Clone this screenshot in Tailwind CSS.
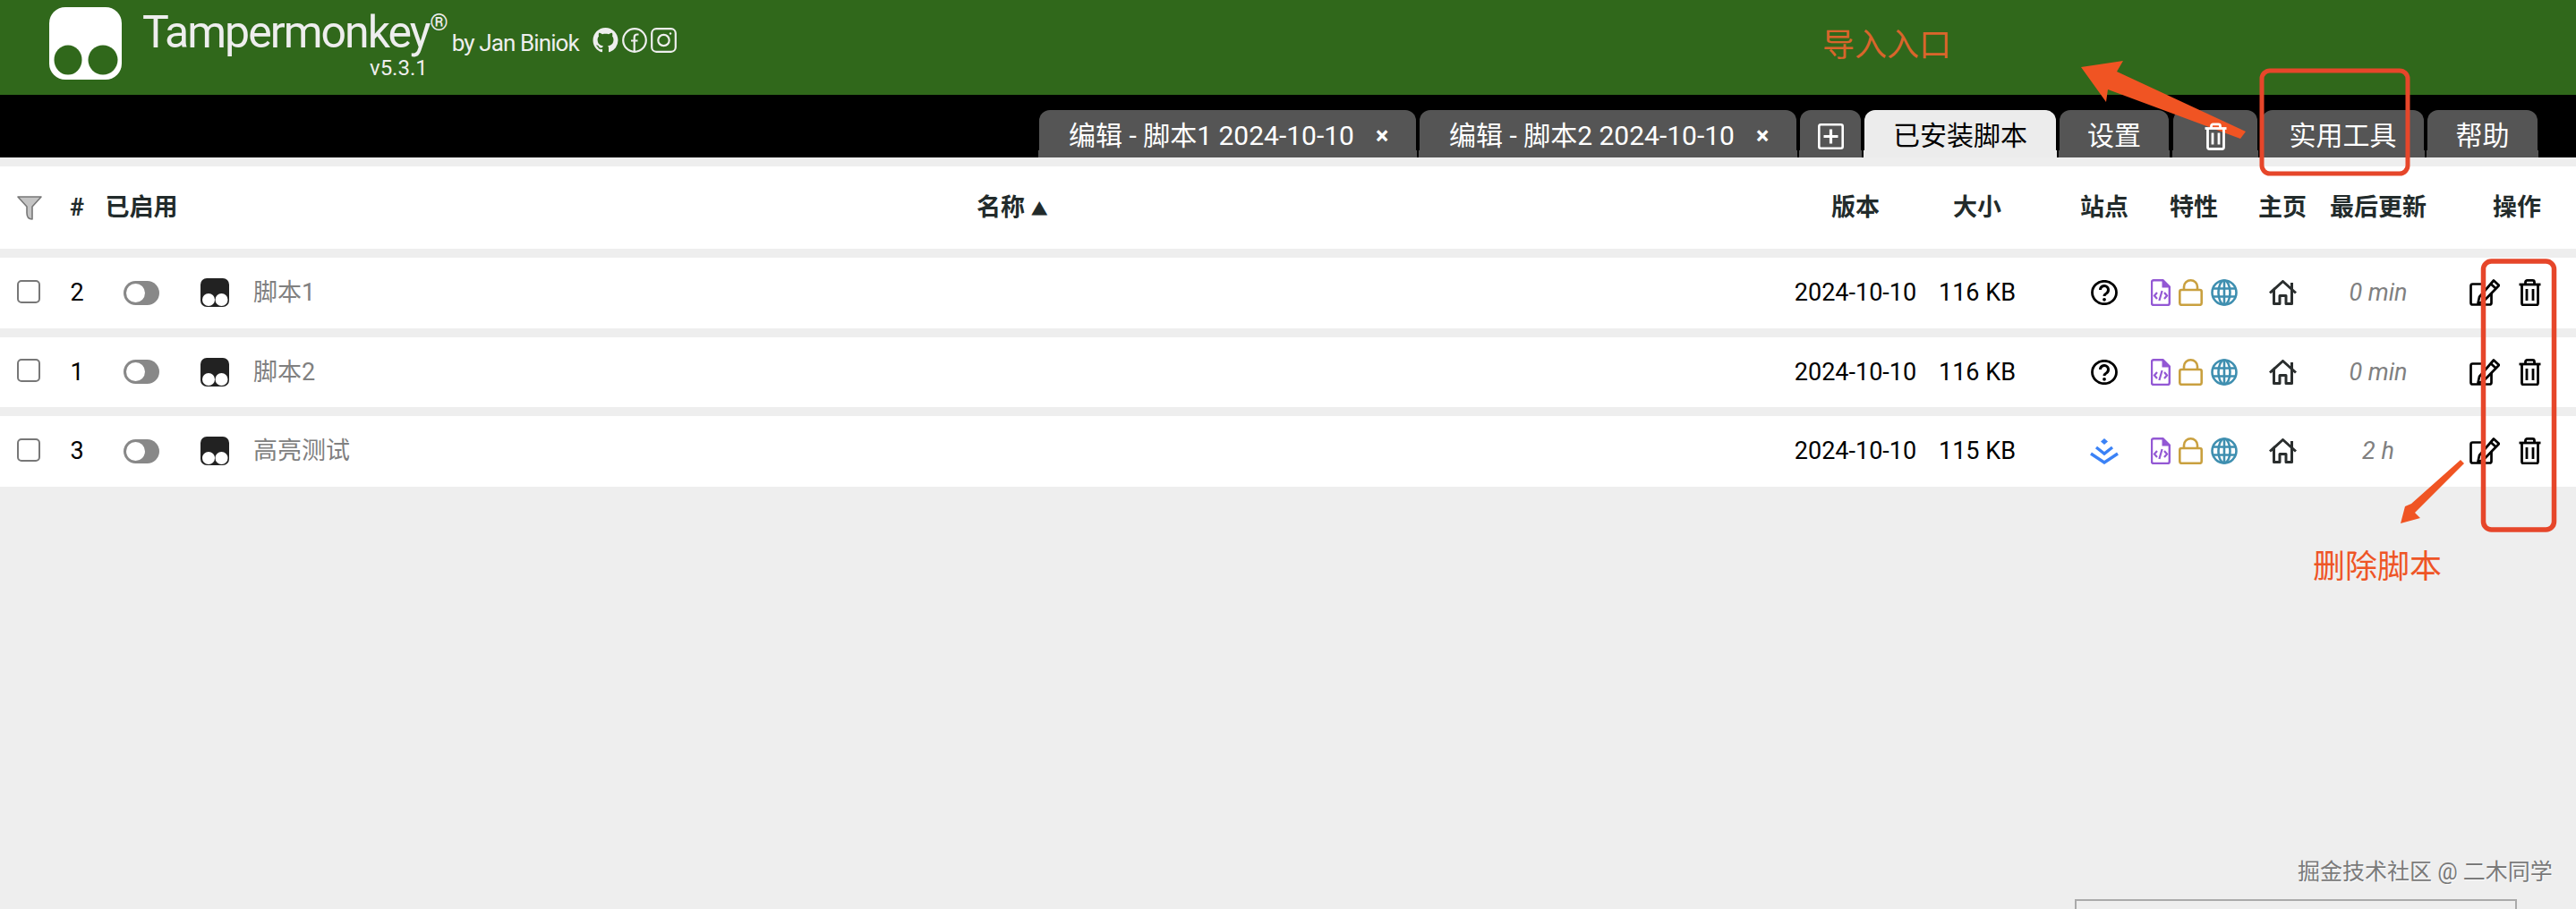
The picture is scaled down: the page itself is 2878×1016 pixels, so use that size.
<!doctype html>
<html>
<head>
  <meta charset="UTF-8" />
  <title>Tampermonkey</title>
  <script src="https://cdn.jsdelivr.net/npm/@tailwindcss/browser@4"></script>
</head>
<body class="relative h-[1016px] overflow-hidden bg-[#eeeeee] font-['Roboto','Noto_Sans_CJK_SC',sans-serif]">
<svg class="hidden">
  <symbol id="i-help" viewBox="0 0 30 28"><ellipse cx="15" cy="14" rx="13.5" ry="12.7" fill="none" stroke="#000" stroke-width="2.8"/><path d="M10.5 11a4.5 4.5 0 1 1 7 3.7c-1.6 1-2.5 1.7-2.5 3.3" fill="none" stroke="#000" stroke-width="3"/><circle cx="15" cy="21.8" r="1.9" fill="#000"/></symbol>
  <symbol id="i-file" viewBox="0 0 22 30"><path d="M3 1.2h10.5l7.3 7.3V27a2 2 0 0 1-2 2H3a2 2 0 0 1-2-2V3.2a2 2 0 0 1 2-2z" fill="none" stroke="#9358d4" stroke-width="2.4"/><path d="M13.5 1.2v7.3h7.3" fill="#9358d4" stroke="#9358d4" stroke-width="2"/><path d="M7 15l-3 3.5 3 3.5M15 15l3 3.5-3 3.5M12.6 13l-3.2 11" fill="none" stroke="#9358d4" stroke-width="2.2"/></symbol>
  <symbol id="i-lock" viewBox="0 0 27 30"><rect x="1.3" y="12" width="24.4" height="16.8" rx="2" fill="none" stroke="#c9a03f" stroke-width="2.6"/><path d="M6 12V8.5a7.5 7.2 0 0 1 15 0V12" fill="none" stroke="#c9a03f" stroke-width="2.6"/></symbol>
  <symbol id="i-globe" viewBox="0 0 30 30"><g fill="none" stroke="#3f8fb0" stroke-width="2.6"><circle cx="15" cy="15" r="13.5"/><ellipse cx="15" cy="15" rx="6.5" ry="13.5"/><path d="M15 1.5v27M2.5 10.5h25M2.5 19.5h25"/></g></symbol>
  <symbol id="i-home" viewBox="0 0 31 28"><g fill="none" stroke="#2a2e2e" stroke-width="3" stroke-linejoin="round"><path d="M1 14.5 15.5 1.5 30 14.5"/><path d="M5.5 11v15.5h6.5v-9h7v9h6.5V11"/><path d="M25.5 3v8"/></g></symbol>
  <symbol id="i-edit" viewBox="0 0 34 30"><g fill="none" stroke="#000" stroke-width="2.7" stroke-linejoin="round"><path d="M17 5.5H3.5a2 2 0 0 0-2 2v19a2 2 0 0 0 2 2h19a2 2 0 0 0 2-2V16"/><path d="M27 1.5 33 7 15 25.5 9.5 27 11 20z"/><path d="M23.5 5l6 5.5"/></g></symbol>
  <symbol id="i-trash" viewBox="0 0 25 30"><g fill="none" stroke="#000" stroke-width="2.8"><path d="M.5 6h24"/><path d="M7.5 6V3.4a2 2 0 0 1 2-2h6a2 2 0 0 1 2 2V6"/><path d="M3.5 6v21a2 2 0 0 0 2 2h14a2 2 0 0 0 2-2V6"/><path d="M9 11v13M16 11v13"/></g></symbol>
  <symbol id="i-tm" viewBox="0 0 32 32"><rect width="32" height="32" rx="7" fill="#222"/><circle cx="9" cy="24" r="7" fill="#fff"/><circle cx="23.5" cy="24" r="7" fill="#fff"/></symbol>
</svg>

<!-- Header -->
<header class="flex h-[106px] items-start bg-[#30681b] pl-[55px] pt-[8px] text-[#eeeeee]">
  <svg width="81" height="81" viewBox="0 0 81 81"><rect width="81" height="81" rx="18" fill="#fff"/><ellipse cx="21" cy="59" rx="15.5" ry="16.5" fill="#30681b"/><ellipse cx="60" cy="59" rx="16.5" ry="16.5" fill="#30681b"/></svg>
  <div class="ml-[23px]">
    <div class="flex h-[56px] items-baseline">
      <span class="text-[50px] leading-[56px] tracking-[-2px]">Tampermonkey</span>
      <span class="ml-[1px] self-start text-[26px] leading-[34px]">®</span>
      <span class="ml-[4px] translate-y-[4px] text-[26px] tracking-[-0.9px]">by Jan Biniok</span>
      <div class="ml-[15px] flex translate-y-[9px] items-center gap-[4px] self-center">
        <svg width="29" height="28" viewBox="0 0 16 16" fill="#eeeeee"><path d="M8 0C3.58 0 0 3.58 0 8c0 3.54 2.29 6.53 5.47 7.59.4.07.55-.17.55-.38 0-.19-.01-.82-.01-1.49-2.01.37-2.53-.49-2.69-.94-.09-.23-.48-.94-.82-1.13-.28-.15-.68-.52-.01-.53.63-.01 1.08.58 1.23.82.72 1.21 1.87.87 2.33.66.07-.52.28-.87.51-1.07-1.78-.2-3.64-.89-3.64-3.95 0-.87.31-1.59.82-2.15-.08-.2-.36-1.02.08-2.12 0 0 .67-.21 2.2.82.64-.18 1.32-.27 2-.27.68 0 1.36.09 2 .27 1.53-1.04 2.2-.82 2.2-.82.44 1.1.16 1.92.08 2.12.51.56.82 1.27.82 2.15 0 3.07-1.87 3.75-3.65 3.95.29.25.54.73.54 1.48 0 1.07-.01 1.93-.01 2.2 0 .21.15.46.55.38A8.013 8.013 0 0016 8c0-4.42-3.58-8-8-8z"/></svg>
        <svg width="28" height="28" viewBox="0 0 28 28" fill="none" stroke="#eeeeee" stroke-width="2.2"><circle cx="14" cy="14" r="12.8"/><path d="M18.5 7.5h-1.6c-2 0-3.2 1.2-3.2 3.2V26M10 14.5h7.5"/></svg>
        <svg width="29" height="28" viewBox="0 0 29 28" fill="none" stroke="#eeeeee" stroke-width="2.2"><rect x="1.2" y="1.2" width="26.6" height="25.6" rx="5"/><circle cx="14.5" cy="14" r="6.2"/><circle cx="22" cy="6.5" r="1.2" fill="#eeeeee" stroke="none"/></svg>
      </div>
    </div>
    <div class="pl-[254px] text-[24px] leading-[24px]">v5.3.1</div>
  </div>
</header>

<!-- Tabs -->
<nav class="flex h-[70px] items-end justify-end gap-[4px] bg-black pr-[43px] text-[30px] leading-none text-white">
  <div class="relative flex h-[53px] w-[421px] items-center rounded-t-[12px] bg-[#555555] pl-[33px] pt-[5px] after:absolute after:inset-x-[-1px] after:bottom-0 after:h-[8px] after:bg-inherit"><span class="relative z-10">编辑 - 脚本1 2024-10-10</span><span class="relative z-10 ml-[24px] text-[27px] font-bold">×</span></div>
  <div class="relative flex h-[53px] w-[421px] items-center rounded-t-[12px] bg-[#555555] pl-[33px] pt-[5px] after:absolute after:inset-x-[-1px] after:bottom-0 after:h-[8px] after:bg-inherit"><span class="relative z-10">编辑 - 脚本2 2024-10-10</span><span class="relative z-10 ml-[24px] text-[27px] font-bold">×</span></div>
  <div class="relative flex h-[53px] w-[68px] items-center justify-center rounded-t-[12px] bg-[#555555] pt-[5px] after:absolute after:inset-x-[-1px] after:bottom-0 after:h-[8px] after:bg-inherit">
    <svg width="29" height="29" viewBox="0 0 29 29" fill="none" stroke="#fff" stroke-width="2.6" class="relative z-10"><rect x="1.3" y="1.3" width="26.4" height="26.4" rx="2"/><path d="M14.5 6.5v16M6.5 14.5h16" stroke-width="3.2"/></svg>
  </div>
  <div class="relative flex h-[53px] w-[214px] items-center justify-center rounded-t-[12px] bg-[#ececec] pt-[5px] text-black after:absolute after:inset-x-[-1px] after:bottom-0 after:h-[8px] after:bg-inherit"><span class="relative z-10">已安装脚本</span></div>
  <div class="relative flex h-[53px] w-[122px] items-center justify-center rounded-t-[12px] bg-[#555555] pt-[5px] after:absolute after:inset-x-[-1px] after:bottom-0 after:h-[8px] after:bg-inherit"><span class="relative z-10">设置</span></div>
  <div class="relative ml-px flex h-[53px] w-[94px] items-center justify-center rounded-t-[12px] bg-[#555555] pt-[5px] after:absolute after:inset-x-[-1px] after:bottom-0 after:h-[8px] after:bg-inherit">
    <svg width="25" height="31" viewBox="0 0 25 30" fill="none" stroke="#fff" stroke-width="2.8" class="relative z-10"><path d="M.5 6h24"/><path d="M7.5 6V3.4a2 2 0 0 1 2-2h6a2 2 0 0 1 2 2V6"/><path d="M3.5 6v21a2 2 0 0 0 2 2h14a2 2 0 0 0 2-2V6"/><path d="M9 11v13M16 11v13"/></svg>
  </div>
  <div class="relative ml-px flex h-[53px] w-[181px] items-center justify-center rounded-t-[12px] bg-[#555555] pt-[5px] after:absolute after:inset-x-[-1px] after:bottom-0 after:h-[8px] after:bg-inherit"><span class="relative z-10">实用工具</span></div>
  <div class="relative flex h-[53px] w-[123px] items-center justify-center rounded-t-[12px] bg-[#555555] pt-[5px] after:absolute after:inset-x-[-1px] after:bottom-0 after:h-[8px] after:bg-inherit"><span class="relative z-10">帮助</span></div>
</nav>

<!-- Script table -->
<main class="flex flex-col gap-[10px] pt-[10px] text-[27px]">
  <div class="grid h-[92px] grid-cols-[70px_32px_112px_56px_1fr_162px_146px_102px_98px_100px_114px_164px] items-center bg-white text-center font-bold text-[#222b2b]">
    <div class="pl-[19px]"><svg width="28" height="27" viewBox="0 0 28 27" class="block"><path d="M1 1h26L17 12v14c-4 0-6-3-6-7v-7z" fill="#c4c4c4" stroke="#777" stroke-width="1.6" stroke-linejoin="round"/></svg></div>
    <div>#</div>
    <div>已启用</div>
    <div></div>
    <div>名称 <span class="text-[19px]">▲</span></div>
    <div>版本</div>
    <div class="pr-[36px]">大小</div>
    <div>站点</div>
    <div>特性</div>
    <div>主页</div>
    <div>最后更新</div>
    <div class="pr-[39px] text-right">操作</div>
  </div>

  <div class="grid h-[78.5px] grid-cols-[70px_32px_112px_56px_1fr_162px_146px_102px_98px_100px_114px_164px] items-center bg-white text-center text-black">
    <div class="pl-[19px]"><div class="-mt-[3px] h-[26px] w-[26px] rounded-[5px] border-2 border-[#777777]"></div></div>
    <div>2</div>
    <div class="flex justify-center"><div class="flex h-[27px] w-[40px] items-center rounded-full bg-[#888888] pl-[3px]"><div class="h-[21px] w-[21px] rounded-full bg-white"></div></div></div>
    <div class="pl-[10px]"><svg width="32" height="32" class="block"><use href="#i-tm"/></svg></div>
    <div class="pl-[13px] text-left text-[#808080]">脚本1</div>
    <div>2024-10-10</div>
    <div class="pr-[36px]">116 KB</div>
    <div class="flex justify-center"><svg width="30" height="28"><use href="#i-help"/></svg></div>
    <div class="flex justify-center gap-[9px]"><svg width="22" height="30"><use href="#i-file"/></svg><svg width="27" height="30"><use href="#i-lock"/></svg><svg width="30" height="30"><use href="#i-globe"/></svg></div>
    <div class="flex justify-center"><svg width="31" height="28"><use href="#i-home"/></svg></div>
    <div class="italic text-[#808080]">0 min</div>
    <div class="flex justify-end gap-[21px] pr-[39px]"><svg width="34" height="30"><use href="#i-edit"/></svg><svg width="25" height="30"><use href="#i-trash"/></svg></div>
  </div>

  <div class="grid h-[78.5px] grid-cols-[70px_32px_112px_56px_1fr_162px_146px_102px_98px_100px_114px_164px] items-center bg-white text-center text-black">
    <div class="pl-[19px]"><div class="-mt-[3px] h-[26px] w-[26px] rounded-[5px] border-2 border-[#777777]"></div></div>
    <div>1</div>
    <div class="flex justify-center"><div class="flex h-[27px] w-[40px] items-center rounded-full bg-[#888888] pl-[3px]"><div class="h-[21px] w-[21px] rounded-full bg-white"></div></div></div>
    <div class="pl-[10px]"><svg width="32" height="32" class="block"><use href="#i-tm"/></svg></div>
    <div class="pl-[13px] text-left text-[#808080]">脚本2</div>
    <div>2024-10-10</div>
    <div class="pr-[36px]">116 KB</div>
    <div class="flex justify-center"><svg width="30" height="28"><use href="#i-help"/></svg></div>
    <div class="flex justify-center gap-[9px]"><svg width="22" height="30"><use href="#i-file"/></svg><svg width="27" height="30"><use href="#i-lock"/></svg><svg width="30" height="30"><use href="#i-globe"/></svg></div>
    <div class="flex justify-center"><svg width="31" height="28"><use href="#i-home"/></svg></div>
    <div class="italic text-[#808080]">0 min</div>
    <div class="flex justify-end gap-[21px] pr-[39px]"><svg width="34" height="30"><use href="#i-edit"/></svg><svg width="25" height="30"><use href="#i-trash"/></svg></div>
  </div>

  <div class="grid h-[78.5px] grid-cols-[70px_32px_112px_56px_1fr_162px_146px_102px_98px_100px_114px_164px] items-center bg-white text-center text-black">
    <div class="pl-[19px]"><div class="-mt-[3px] h-[26px] w-[26px] rounded-[5px] border-2 border-[#777777]"></div></div>
    <div>3</div>
    <div class="flex justify-center"><div class="flex h-[27px] w-[40px] items-center rounded-full bg-[#888888] pl-[3px]"><div class="h-[21px] w-[21px] rounded-full bg-white"></div></div></div>
    <div class="pl-[10px]"><svg width="32" height="32" class="block"><use href="#i-tm"/></svg></div>
    <div class="pl-[13px] text-left text-[#808080]">高亮测试</div>
    <div>2024-10-10</div>
    <div class="pr-[36px]">115 KB</div>
    <div class="flex justify-center"><svg width="34" height="30" viewBox="0 0 34 30" fill="none" stroke="#3b82f6" stroke-width="3.4"><path d="M17 1l4 3.5-4 3.5-4-3.5z" fill="#3b82f6" stroke="none"/><path d="M8 11l9 7 9-7"/><path d="M2 18l15 10 15-10"/></svg></div>
    <div class="flex justify-center gap-[9px]"><svg width="22" height="30"><use href="#i-file"/></svg><svg width="27" height="30"><use href="#i-lock"/></svg><svg width="30" height="30"><use href="#i-globe"/></svg></div>
    <div class="flex justify-center"><svg width="31" height="28"><use href="#i-home"/></svg></div>
    <div class="italic text-[#808080]">2 h</div>
    <div class="flex justify-end gap-[21px] pr-[39px]"><svg width="34" height="30"><use href="#i-edit"/></svg><svg width="25" height="30"><use href="#i-trash"/></svg></div>
  </div>
</main>

<!-- Annotations drawn over the screenshot -->
<svg class="absolute left-0 top-0" width="2878" height="1016" viewBox="0 0 2878 1016" fill="none">
  <rect x="2527" y="79" width="163" height="115" rx="9" stroke="#e6462a" stroke-width="5"/>
  <rect x="2774.5" y="292" width="79" height="300" rx="9" stroke="#e6462a" stroke-width="5.5"/>
  <path d="M2325 75 2372 68 2365 80 2509 147 2503 155 2355 100 2353 114z" fill="#f05423"/>
  <path d="M2682 585 2704 579 2698 573 2753 518 2749 514 2694 563 2687 566z" fill="#f05423"/>
</svg>
<div class="absolute left-[2036px] top-[31px] text-[36px] leading-[40px] text-[#d9652c]">导入入口</div>
<div class="absolute left-[2584px] top-[614px] text-[36px] leading-[40px] text-[#ee5526]">删除脚本</div>
<div class="absolute left-[2567px] top-[960px] text-[25px] leading-[30px] text-[#7a7a7a] [text-shadow:1px_1px_1px_rgba(255,255,255,0.8)]">掘金技术社区 @ 二木同学</div>
<div class="absolute left-[2318px] top-[1005px] h-[20px] w-[494px] border-2 border-[#aaaaaa] bg-[#eeeeee]"></div>
</body>
</html>
